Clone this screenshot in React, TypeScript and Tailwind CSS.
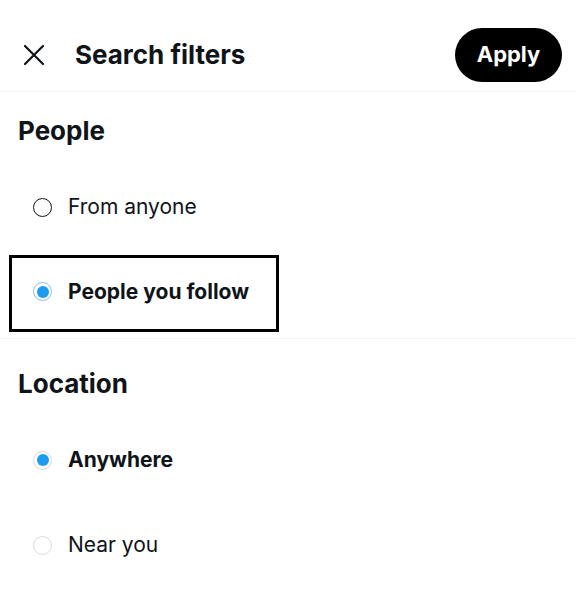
import React, { useState } from "react";

const Radio = ({ checked, muted, focused }: { checked: boolean; muted?: boolean; focused?: boolean }) => (
  <div
    className={`flex h-[19px] w-[19px] items-center justify-center rounded-full border-[1.5px] ${
      checked ? (focused ? "border-[#8fbfe0]" : "border-[#d3dbe0]") : muted ? "border-[#d6dde2]" : "border-[#0f1419]"
    }`}
  >
    {checked && <div className="h-[12px] w-[12px] rounded-full bg-[#1d9bf0]" />}
  </div>
);

const Option = ({
  label,
  checked,
  muted,
  focused,
  onClick,
}: {
  label: string;
  checked: boolean;
  muted?: boolean;
  focused?: boolean;
  onClick: () => void;
}) => (
  <div className="flex items-center gap-[16px] pl-[33px] cursor-pointer" onClick={onClick}>
    <Radio checked={checked} muted={muted} focused={focused} />
    <span className={`text-[21px] text-[#0f1419] ${checked ? "font-bold" : "font-normal"}`}>
      {label}
    </span>
  </div>
);

export default function App() {
  const [people, setPeople] = useState("follow");
  const [location, setLocation] = useState("anywhere");

  return (
    <div
      className="w-[576px] h-[605px] bg-white overflow-hidden"
      style={{ fontFamily: "Inter, 'Noto Sans', sans-serif" }}
    >
      {/* header */}
      <div className="flex h-[92px] items-center justify-between border-b border-[#f2f4f5] pl-[22px] pr-[14px] pt-[18px]">
        <div className="flex items-center gap-[29px]">
          <svg width="24" height="24" viewBox="0 0 24 24" fill="none" stroke="#0f1419" strokeWidth="2.2" strokeLinecap="round">
            <path d="M3 3 L21 21 M21 3 L3 21" />
          </svg>
          <h1 className="text-[26px] font-bold text-[#0f1419]">Search filters</h1>
        </div>
        <button className="h-[54px] w-[107px] rounded-full bg-black text-[22px] font-bold text-white">
          Apply
        </button>
      </div>

      {/* people */}
      <div className="flex flex-col border-b border-[#f2f4f5]">
        <div className="flex h-[76px] items-center pl-[18px]">
          <h2 className="text-[26px] font-bold text-[#0f1419]">People</h2>
        </div>
        <div className="flex h-[78px] items-center">
          <Option label="From anyone" checked={people === "anyone"} onClick={() => setPeople("anyone")} />
        </div>
        <div className="mt-[9px] mb-[6px] ml-[9px] flex h-[77px] w-[270px] items-center border-[3px] border-black pb-[4px]">
          <div className="-ml-[12px]">
            <Option label="People you follow" checked={people === "follow"} focused onClick={() => setPeople("follow")} />
          </div>
        </div>
      </div>

      {/* location */}
      <div className="flex flex-col">
        <div className="flex h-[84px] items-center pl-[18px] pt-[4px]">
          <h2 className="text-[26px] font-bold text-[#0f1419]">Location</h2>
        </div>
        <div className="flex h-[74px] items-center">
          <Option label="Anywhere" checked={location === "anywhere"} onClick={() => setLocation("anywhere")} />
        </div>
        <div className="flex h-[96px] items-center">
          <Option label="Near you" checked={location === "near"} muted onClick={() => setLocation("near")} />
        </div>
      </div>
    </div>
  );
}
